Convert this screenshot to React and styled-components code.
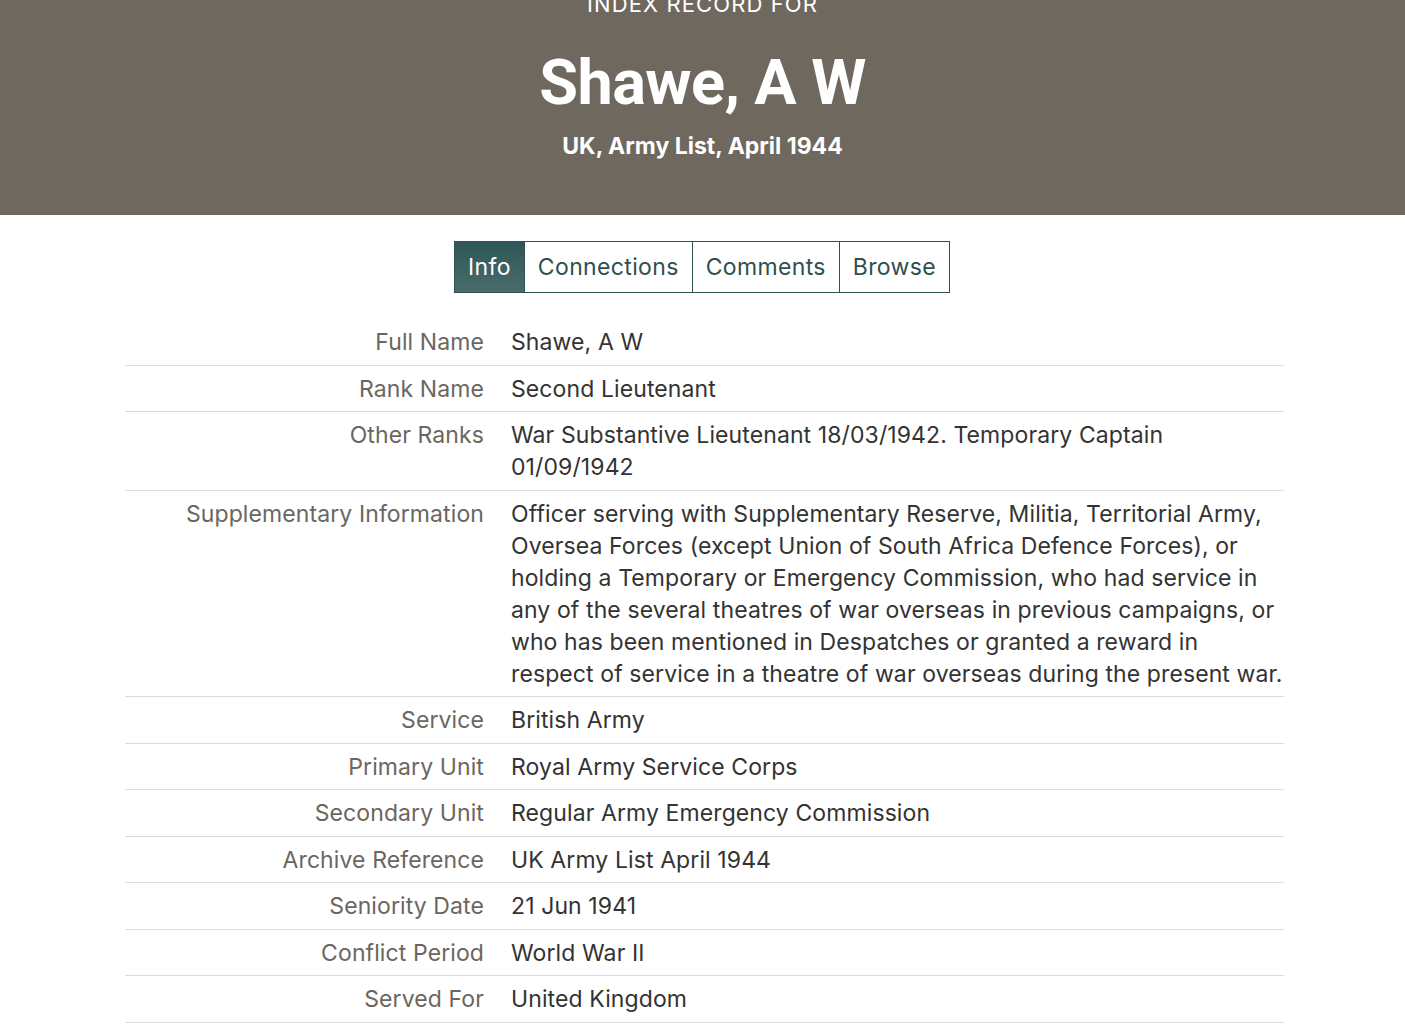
import React from "react";
import styled, { createGlobalStyle } from "styled-components";

const Global = createGlobalStyle`
  html, body { margin: 0; padding: 0; background: #fff; }
  body { font-family: Inter, "Noto Sans", "Liberation Sans", sans-serif; color: #333; overflow: hidden; }
  * { box-sizing: border-box; }
`;

const Header = styled.header`
  background: #6f685f;
  color: #fff;
  text-align: center;
  margin-top: -10px;
  height: 225px;
  display: flex;
  flex-direction: column;
  align-items: center;
`;

const Kicker = styled.div`
  font-size: 22px;
  line-height: 28px;
  text-transform: uppercase;
  letter-spacing: 1.1px;
`;

const Title = styled.h1`
  margin: 29px 0 0;
  font-family: Roboto, Inter, sans-serif;
  font-size: 63px;
  line-height: 72px;
  font-weight: 700;
  letter-spacing: -0.6px;
`;

const Subtitle = styled.h2`
  margin: 12px 0 0;
  font-size: 23px;
  line-height: 30px;
  font-weight: 700;
  letter-spacing: 0;
`;

const Tabs = styled.nav`
  display: flex;
  justify-content: center;
  margin-top: 26px;
`;

const Tab = styled.button`
  font-family: inherit;
  font-size: 23px;
  letter-spacing: 0.35px;
  height: 52px;
  padding: 0 13px;
  border: 1px solid #2f5252;
  margin-left: -1px;
  color: ${(p) => (p.$active ? "#fff" : "#2f4f4f")};
  background: ${(p) =>
    p.$active ? "linear-gradient(180deg, #2e5656 0%, #4a6b6b 100%)" : "#fff"};
  cursor: pointer;
`;

const Table = styled.dl`
  width: 1159px;
  margin: 26px 0 0 125px;
  padding: 0;
`;

const Row = styled.div`
  display: grid;
  grid-template-columns: 359px 1fr;
  column-gap: 27px;
  padding: 7px 0 6.5px;
  border-bottom: 1px solid #dcdcdc;
  font-size: 23px;
  letter-spacing: 0.1px;
  line-height: 32px;
`;

const Label = styled.dt`
  text-align: right;
  color: #6b6660;
  margin: 0;
`;

const Value = styled.dd`
  margin: 0;
  color: #333;
`;

const rows = [
  ["Full Name", "Shawe, A W"],
  ["Rank Name", "Second Lieutenant"],
  ["Other Ranks", "War Substantive Lieutenant 18/03/1942. Temporary Captain 01/09/1942"],
  [
    "Supplementary Information",
    "Officer serving with Supplementary Reserve, Militia, Territorial Army, Oversea Forces (except Union of South Africa Defence Forces), or holding a Temporary or Emergency Commission, who had service in any of the several theatres of war overseas in previous campaigns, or who has been mentioned in Despatches or granted a reward in respect of service in a theatre of war overseas during the present war.",
  ],
  ["Service", "British Army"],
  ["Primary Unit", "Royal Army Service Corps"],
  ["Secondary Unit", "Regular Army Emergency Commission"],
  ["Archive Reference", "UK Army List April 1944"],
  ["Seniority Date", "21 Jun 1941"],
  ["Conflict Period", "World War II"],
  ["Served For", "United Kingdom"],
];

export default function App() {
  return (
    <>
      <Global />
      <Header>
        <Kicker>Index Record For</Kicker>
        <Title>Shawe, A W</Title>
        <Subtitle>UK, Army List, April 1944</Subtitle>
      </Header>
      <Tabs>
        <Tab $active>Info</Tab>
        <Tab>Connections</Tab>
        <Tab>Comments</Tab>
        <Tab>Browse</Tab>
      </Tabs>
      <Table>
        {rows.map(([l, v]) => (
          <Row key={l}>
            <Label>{l}</Label>
            <Value>{v}</Value>
          </Row>
        ))}
      </Table>
    </>
  );
}
